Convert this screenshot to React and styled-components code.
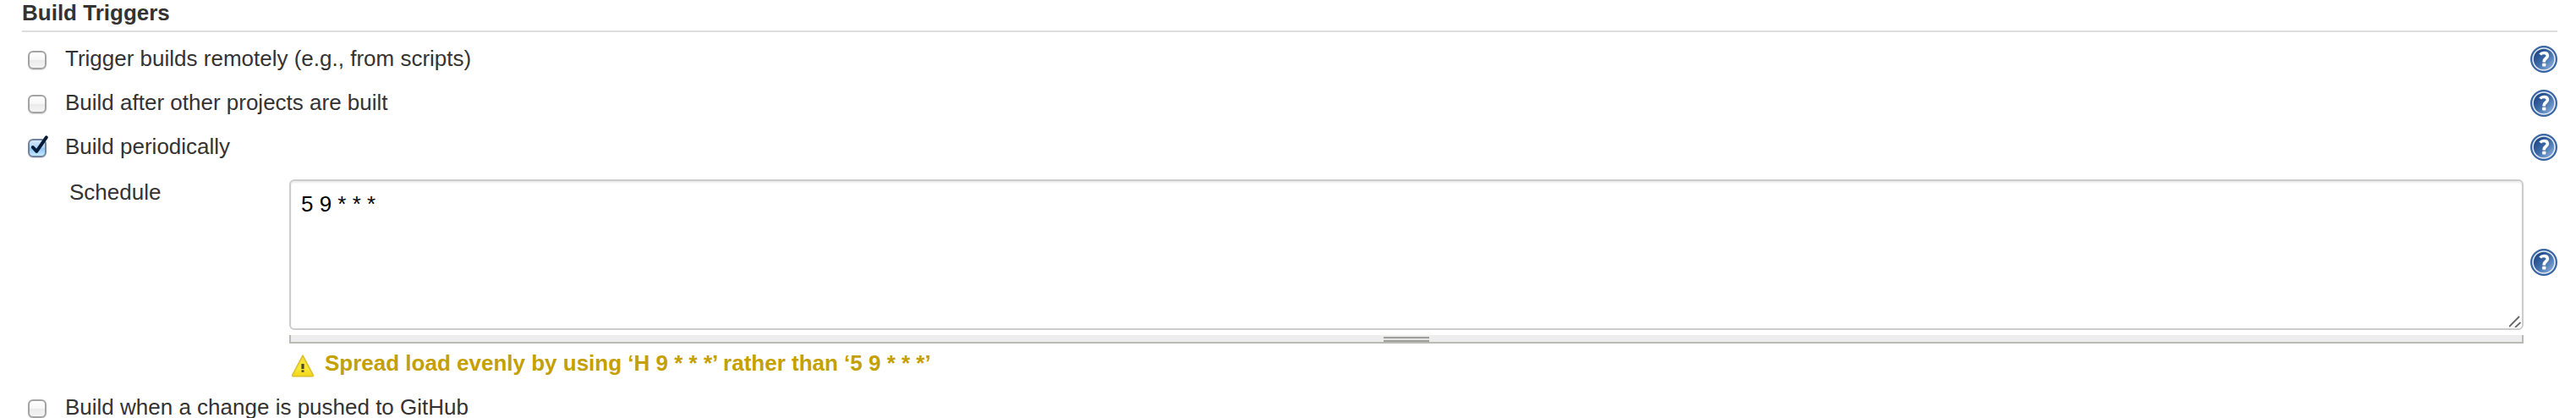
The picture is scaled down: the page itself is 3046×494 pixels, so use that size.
import React from 'react';
import styled, { createGlobalStyle } from 'styled-components';

const GlobalStyle = createGlobalStyle`
  * {
    box-sizing: border-box;
  }

  body {
    margin: 0;
    background: #fff;
    overflow: hidden;
  }
`;

const Page = styled.div`
  height: 494px;
  padding: 0 22px 0 26px;
  overflow: hidden;
  font-family: 'Liberation Sans', Helvetica, Arial, sans-serif;
  font-size: 26px;
  line-height: 30px;
  color: #333;
`;

const SectionHeader = styled.div`
  height: 38px;
  border-bottom: 2px solid #ddd;
  font-weight: bold;
  white-space: nowrap;
`;

const Options = styled.div`
  padding-top: 6px;
`;

const OptionRow = styled.div`
  display: flex;
  align-items: center;
  height: 52px;
  padding-left: 7px;
`;

const Label = styled.label`
  flex: 1;
  margin-left: 22px;
  padding-bottom: 2px;
  white-space: nowrap;
`;

const Checkbox = styled.span`
  width: 22px;
  height: 22px;
  margin-top: 2px;
  border: 2px solid ${(props) => (props.$checked ? '#72839f' : '#a3a3a3')};
  border-radius: 6px;
  background: ${(props) =>
    props.$checked
      ? 'linear-gradient(#d9e9fb 0%, #a9cff5 50%, #8fc3f3 52%, #c3e9ff 100%)'
      : 'linear-gradient(#fff 0%, #f6f6f6 50%, #ebebeb 52%, #f4f4f4 100%)'};
  box-shadow: 0 1px 1px rgba(0, 0, 0, 0.15);

  svg {
    display: block;
    overflow: visible;
  }
`;

const ScheduleRow = styled.div`
  display: flex;
  height: 206px;
  padding-top: 12px;
`;

const ScheduleName = styled.div`
  width: 316px;
  padding-left: 56px;
`;

const Editor = styled.div`
  flex: 1;
`;

const TextareaBox = styled.div`
  position: relative;
`;

const Textarea = styled.textarea`
  display: block;
  width: 100%;
  height: 178px;
  margin: 0;
  padding: 12px;
  border: 2px solid #ccc;
  border-radius: 6px;
  box-shadow: inset 0 2px 2px rgba(0, 0, 0, 0.075);
  outline: none;
  resize: none;
  font: inherit;
  color: #000;
`;

const Grip = styled.svg`
  position: absolute;
  right: 3px;
  bottom: 3px;
`;

const ResizeBar = styled.div`
  display: flex;
  justify-content: center;
  height: 10px;
  margin-top: 6px;
  padding-top: 2px;
  border: 2px solid #babab4;
  border-top: 0;
  background: #ededed;
`;

const Handle = styled.div`
  width: 54px;
  height: 6px;
  border: 2px solid #9f9f9c;
  border-width: 2px 0;
  background: #e3e3e1;
`;

const HelpCell = styled.div`
  display: flex;
  align-items: center;
  height: 196px;
  margin-left: 8px;
`;

const HelpSvg = styled.svg`
  display: block;
  width: 32px;
  height: 32px;
`;

const Warning = styled.div`
  display: flex;
  align-items: center;
  height: 50px;
  padding: 0 0 4px 317px;
  font-weight: bold;
  color: #c4a000;
  white-space: nowrap;

  svg {
    margin: 6px 11px 0 0;
  }
`;

const HelpIcon = () => (
  <HelpSvg viewBox='0 0 32 32'>
    <defs>
      <linearGradient id='help' x1='0' y1='0' x2='1' y2='1'>
        <stop offset='0.15' stopColor='#204a87' />
        <stop offset='0.5' stopColor='#3f6ba8' />
        <stop offset='0.9' stopColor='#86abd9' />
      </linearGradient>
    </defs>
    <circle cx='16' cy='16' r='14.9' fill='#e4ebf5' stroke='#3865a3' strokeWidth='2.2' />
    <circle cx='16' cy='16' r='12.2' fill='url(#help)' />
    <path
      d='M11.6 10.5c1.2-1.5 2.8-2 4.6-2 2.6 0 4.2 1.3 4.2 3.4 0 3.2-4.2 3.1-4.2 6.7v.8'
      fill='none'
      stroke='#fff'
      strokeWidth='3.6'
    />
    <rect x='14.1' y='20.7' width='4.3' height='3.8' rx='0.8' fill='#fff' />
  </HelpSvg>
);

const WarningIcon = () => (
  <svg width='30' height='30' viewBox='0 0 30 30'>
    <defs>
      <linearGradient id='warn' x1='0' y1='0' x2='0' y2='1'>
        <stop offset='0' stopColor='#f0dc3a' />
        <stop offset='0.6' stopColor='#fbe736' />
        <stop offset='1' stopColor='#f2d417' />
      </linearGradient>
    </defs>
    <path
      d='M15 3.2 L27.2 26.2 Q27.8 27.8 26.2 27.8 H3.8 Q2.2 27.8 2.8 26.2 Z'
      fill='url(#warn)'
      stroke='#dcc02c'
      strokeWidth='1.6'
      strokeLinejoin='round'
    />
    <path d='M15 13v6' stroke='#4a4930' strokeWidth='3.2' />
    <path d='M15 20.4v2.4' stroke='#4a4930' strokeWidth='3' />
  </svg>
);

const CheckMark = () => (
  <svg width='18' height='18' viewBox='0 0 18 18'>
    <path
      d='M3.8 8 L8.3 12.8 L19.8 -3.6'
      fill='none'
      stroke='#041c38'
      strokeWidth='4'
      strokeLinecap='round'
      strokeLinejoin='round'
    />
  </svg>
);

const Option = ({ text, checked, help = true }) => (
  <OptionRow>
    <Checkbox $checked={checked}>{checked && <CheckMark />}</Checkbox>
    <Label>{text}</Label>
    {help && <HelpIcon />}
  </OptionRow>
);

const App = () => {
  return (
    <>
      <GlobalStyle />
      <Page>
        <SectionHeader>Build Triggers</SectionHeader>
        <Options>
          <Option text='Trigger builds remotely (e.g., from scripts)' />
          <Option text='Build after other projects are built' />
          <Option text='Build periodically' checked />
        </Options>
        <ScheduleRow>
          <ScheduleName>Schedule</ScheduleName>
          <Editor>
            <TextareaBox>
              <Textarea defaultValue='5 9 * * *' spellCheck={false} />
              <Grip width='14' height='14' viewBox='0 0 14 14'>
                <path d='M0 13 L12 1 M7 14 L13.5 8' stroke='#666' strokeWidth='1.8' fill='none' />
              </Grip>
            </TextareaBox>
            <ResizeBar>
              <Handle />
            </ResizeBar>
          </Editor>
          <HelpCell>
            <HelpIcon />
          </HelpCell>
        </ScheduleRow>
        <Warning>
          <WarningIcon />
          Spread load evenly by using ‘H 9 * * *’ rather than ‘5 9 * * *’
        </Warning>
        <Option text='Build when a change is pushed to GitHub' help={false} />
      </Page>
    </>
  );
};

export default App;
